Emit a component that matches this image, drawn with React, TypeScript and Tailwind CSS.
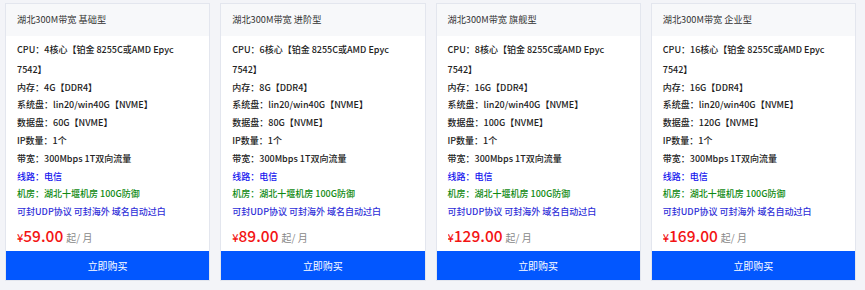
import React from "react";

type Plan = {
  tier: string;
  cores: string;
  ram: string;
  data: string;
  price: string;
};

const plans: Plan[] = [
  { tier: "基础型", cores: "4", ram: "4G", data: "60G", price: "59.00" },
  { tier: "进阶型", cores: "6", ram: "8G", data: "80G", price: "89.00" },
  { tier: "旗舰型", cores: "8", ram: "16G", data: "100G", price: "129.00" },
  { tier: "企业型", cores: "16", ram: "16G", data: "120G", price: "169.00" },
];

function PlanCard({ plan }: { plan: Plan }) {
  return (
    <div className="flex flex-col border border-[#e3e6ee] bg-white">
      <div className="flex h-[32px] items-center bg-[#f7f8fa] px-[11px] text-[9.2px] text-[#333]">
        湖北300M带宽 {plan.tier}
      </div>
      <div className="flex flex-col px-[11px] pt-[5px] text-[9px] font-medium leading-[17.8px] text-[#222]">
        <div className="whitespace-nowrap pb-[2px]">
          CPU：{plan.cores}核心【铂金 8255C或AMD Epyc
        </div>
        <div>7542】</div>
        <div>内存：{plan.ram}【DDR4】</div>
        <div>系统盘：lin20/win40G【NVME】</div>
        <div>数据盘：{plan.data}【NVME】</div>
        <div>IP数量：1个</div>
        <div>带宽：300Mbps 1T双向流量</div>
        <div className="text-[#1515ee]">线路：电信</div>
        <div className="text-[#0f8a12]">机房：湖北十堰机房 100G防御</div>
        <div className="whitespace-nowrap text-[#2f2fd8]">可封UDP协议 可封海外 域名自动过白</div>
        <div className="mt-[3px] mb-[5px] flex h-[22px] items-end overflow-hidden leading-none">
          <span className="mb-[3px] text-[11px] font-medium text-[#f31414]">¥</span>
          <span className="mb-[2px] text-[15.5px] font-medium text-[#f31414]">{plan.price}</span>
          <span className="mb-[3px] ml-[3px] text-[10px] font-normal text-[#888]">起/ 月</span>
        </div>
      </div>
      <button className="flex h-[29px] items-center justify-center bg-[#0257ff] text-[10px] text-white">
        立即购买
      </button>
    </div>
  );
}

export default function App() {
  return (
    <div
      className="h-[290px] w-[865px] bg-[#f3f4f8] pl-[5px] pr-[9px] pt-[3px]"
      style={{ fontFamily: '"Noto Sans CJK SC", "Noto Sans", sans-serif' }}
    >
      <div className="grid grid-cols-4 gap-x-[10px]">
        {plans.map((p) => (
          <PlanCard key={p.tier} plan={p} />
        ))}
      </div>
    </div>
  );
}
